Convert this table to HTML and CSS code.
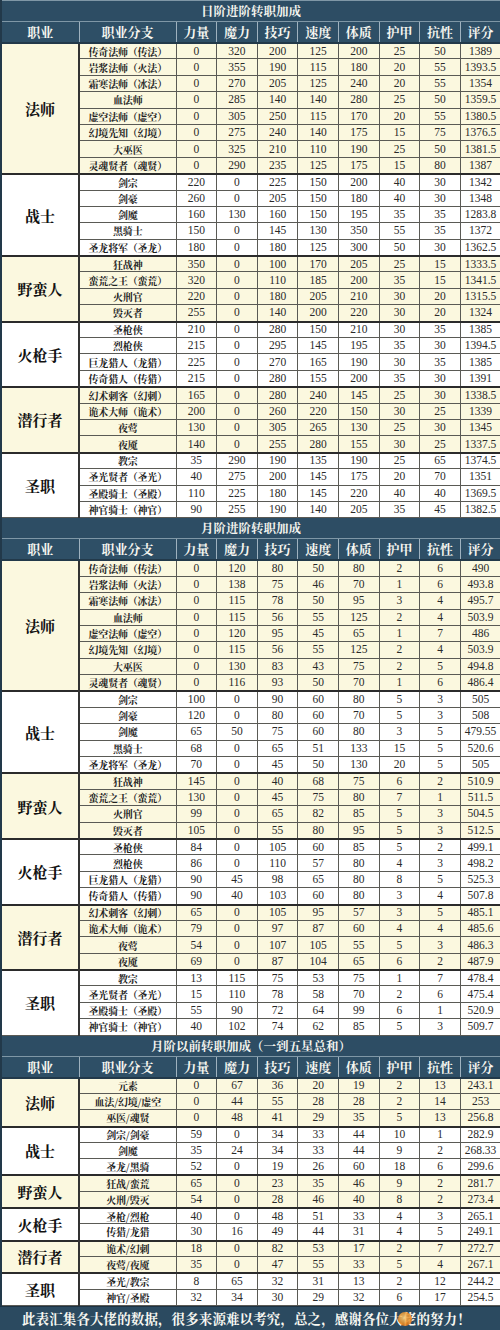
FILE: index.html
```html
<!DOCTYPE html>
<html lang="zh">
<head>
<meta charset="utf-8">
<title>转职加成</title>
<link rel="stylesheet" href="styles.css">
</head>
<body>
<div class="page">
<table class="grid">
<colgroup>
<col class="c-cls"><col class="c-br"><col span="8" class="c-num">
</colgroup>
<tbody>
<tr class="sec"><th colspan="10">日阶进阶转职加成</th></tr>
<tr class="hd"><th>职业</th><th>职业分支</th><th>力量</th><th>魔力</th><th>技巧</th><th>速度</th><th>体质</th><th>护甲</th><th>抗性</th><th>评分</th></tr>

<tr class="y first"><td class="cls" rowspan="8">法师</td><td class="br">传奇法师（传法）</td><td>0</td><td>320</td><td>200</td><td>125</td><td>200</td><td>25</td><td>50</td><td>1389</td></tr>
<tr class="y"><td class="br">岩浆法师（火法）</td><td>0</td><td>355</td><td>190</td><td>115</td><td>180</td><td>20</td><td>55</td><td>1393.5</td></tr>
<tr class="y"><td class="br">霜寒法师（冰法）</td><td>0</td><td>270</td><td>205</td><td>125</td><td>240</td><td>20</td><td>55</td><td>1354</td></tr>
<tr class="y"><td class="br">血法师</td><td>0</td><td>285</td><td>140</td><td>140</td><td>280</td><td>25</td><td>50</td><td>1359.5</td></tr>
<tr class="y"><td class="br">虚空法师（虚空）</td><td>0</td><td>305</td><td>250</td><td>115</td><td>170</td><td>20</td><td>55</td><td>1380.5</td></tr>
<tr class="y"><td class="br">幻境先知（幻境）</td><td>0</td><td>275</td><td>240</td><td>140</td><td>175</td><td>15</td><td>75</td><td>1376.5</td></tr>
<tr class="y"><td class="br">大巫医</td><td>0</td><td>325</td><td>210</td><td>110</td><td>190</td><td>25</td><td>50</td><td>1381.5</td></tr>
<tr class="y"><td class="br">灵魂贤者（魂贤）</td><td>0</td><td>290</td><td>235</td><td>125</td><td>175</td><td>15</td><td>80</td><td>1387</td></tr>

<tr class="w first"><td class="cls" rowspan="5">战士</td><td class="br">剑宗</td><td>220</td><td>0</td><td>225</td><td>150</td><td>200</td><td>40</td><td>30</td><td>1342</td></tr>
<tr class="w"><td class="br">剑豪</td><td>260</td><td>0</td><td>205</td><td>150</td><td>180</td><td>40</td><td>30</td><td>1348</td></tr>
<tr class="w"><td class="br">剑魔</td><td>160</td><td>130</td><td>160</td><td>150</td><td>195</td><td>35</td><td>35</td><td>1283.8</td></tr>
<tr class="w"><td class="br">黑骑士</td><td>150</td><td>0</td><td>145</td><td>130</td><td>350</td><td>55</td><td>35</td><td>1372</td></tr>
<tr class="w"><td class="br">圣龙将军（圣龙）</td><td>180</td><td>0</td><td>180</td><td>125</td><td>300</td><td>50</td><td>30</td><td>1362.5</td></tr>

<tr class="y first"><td class="cls" rowspan="4">野蛮人</td><td class="br">狂战神</td><td>350</td><td>0</td><td>100</td><td>170</td><td>205</td><td>25</td><td>15</td><td>1333.5</td></tr>
<tr class="y"><td class="br">蛮荒之王（蛮荒）</td><td>320</td><td>0</td><td>110</td><td>185</td><td>200</td><td>35</td><td>15</td><td>1341.5</td></tr>
<tr class="y"><td class="br">火刑官</td><td>220</td><td>0</td><td>180</td><td>205</td><td>210</td><td>30</td><td>20</td><td>1315.5</td></tr>
<tr class="y"><td class="br">毁灭者</td><td>255</td><td>0</td><td>140</td><td>200</td><td>220</td><td>30</td><td>20</td><td>1324</td></tr>

<tr class="w first"><td class="cls" rowspan="4">火枪手</td><td class="br">圣枪侠</td><td>210</td><td>0</td><td>280</td><td>150</td><td>210</td><td>30</td><td>35</td><td>1385</td></tr>
<tr class="w"><td class="br">烈枪侠</td><td>215</td><td>0</td><td>295</td><td>145</td><td>195</td><td>35</td><td>30</td><td>1394.5</td></tr>
<tr class="w"><td class="br">巨龙猎人（龙猎）</td><td>225</td><td>0</td><td>270</td><td>165</td><td>190</td><td>30</td><td>35</td><td>1385</td></tr>
<tr class="w"><td class="br">传奇猎人（传猎）</td><td>215</td><td>0</td><td>280</td><td>155</td><td>200</td><td>35</td><td>30</td><td>1391</td></tr>

<tr class="y first"><td class="cls" rowspan="4">潜行者</td><td class="br">幻术刺客（幻刺）</td><td>165</td><td>0</td><td>280</td><td>240</td><td>145</td><td>25</td><td>30</td><td>1338.5</td></tr>
<tr class="y"><td class="br">诡术大师（诡术）</td><td>200</td><td>0</td><td>260</td><td>220</td><td>150</td><td>30</td><td>25</td><td>1339</td></tr>
<tr class="y"><td class="br">夜莺</td><td>130</td><td>0</td><td>305</td><td>265</td><td>130</td><td>25</td><td>30</td><td>1345</td></tr>
<tr class="y"><td class="br">夜魇</td><td>140</td><td>0</td><td>255</td><td>280</td><td>155</td><td>30</td><td>25</td><td>1337.5</td></tr>

<tr class="w first"><td class="cls" rowspan="4">圣职</td><td class="br">教宗</td><td>35</td><td>290</td><td>190</td><td>135</td><td>190</td><td>25</td><td>65</td><td>1374.5</td></tr>
<tr class="w"><td class="br">圣光贤者（圣光）</td><td>40</td><td>275</td><td>200</td><td>145</td><td>175</td><td>20</td><td>70</td><td>1351</td></tr>
<tr class="w"><td class="br">圣殿骑士（圣殿）</td><td>110</td><td>225</td><td>180</td><td>145</td><td>220</td><td>40</td><td>40</td><td>1369.5</td></tr>
<tr class="w"><td class="br">神官骑士（神官）</td><td>90</td><td>255</td><td>190</td><td>140</td><td>205</td><td>35</td><td>45</td><td>1382.5</td></tr>

<tr class="sec"><th colspan="10">月阶进阶转职加成</th></tr>
<tr class="hd"><th>职业</th><th>职业分支</th><th>力量</th><th>魔力</th><th>技巧</th><th>速度</th><th>体质</th><th>护甲</th><th>抗性</th><th>评分</th></tr>

<tr class="y first"><td class="cls" rowspan="8">法师</td><td class="br">传奇法师（传法）</td><td>0</td><td>120</td><td>80</td><td>50</td><td>80</td><td>2</td><td>6</td><td>490</td></tr>
<tr class="y"><td class="br">岩浆法师（火法）</td><td>0</td><td>138</td><td>75</td><td>46</td><td>70</td><td>1</td><td>6</td><td>493.8</td></tr>
<tr class="y"><td class="br">霜寒法师（冰法）</td><td>0</td><td>115</td><td>78</td><td>50</td><td>95</td><td>3</td><td>4</td><td>495.7</td></tr>
<tr class="y"><td class="br">血法师</td><td>0</td><td>115</td><td>56</td><td>55</td><td>125</td><td>2</td><td>4</td><td>503.9</td></tr>
<tr class="y"><td class="br">虚空法师（虚空）</td><td>0</td><td>120</td><td>95</td><td>45</td><td>65</td><td>1</td><td>7</td><td>486</td></tr>
<tr class="y"><td class="br">幻境先知（幻境）</td><td>0</td><td>115</td><td>56</td><td>55</td><td>125</td><td>2</td><td>4</td><td>503.9</td></tr>
<tr class="y"><td class="br">大巫医</td><td>0</td><td>130</td><td>83</td><td>43</td><td>75</td><td>2</td><td>5</td><td>494.8</td></tr>
<tr class="y"><td class="br">灵魂贤者（魂贤）</td><td>0</td><td>116</td><td>93</td><td>50</td><td>70</td><td>1</td><td>6</td><td>486.4</td></tr>

<tr class="w first"><td class="cls" rowspan="5">战士</td><td class="br">剑宗</td><td>100</td><td>0</td><td>90</td><td>60</td><td>80</td><td>5</td><td>3</td><td>505</td></tr>
<tr class="w"><td class="br">剑豪</td><td>120</td><td>0</td><td>80</td><td>60</td><td>70</td><td>5</td><td>3</td><td>508</td></tr>
<tr class="w"><td class="br">剑魔</td><td>65</td><td>50</td><td>75</td><td>60</td><td>80</td><td>3</td><td>5</td><td>479.55</td></tr>
<tr class="w"><td class="br">黑骑士</td><td>68</td><td>0</td><td>65</td><td>51</td><td>133</td><td>15</td><td>5</td><td>520.6</td></tr>
<tr class="w"><td class="br">圣龙将军（圣龙）</td><td>70</td><td>0</td><td>45</td><td>50</td><td>130</td><td>20</td><td>5</td><td>505</td></tr>

<tr class="y first"><td class="cls" rowspan="4">野蛮人</td><td class="br">狂战神</td><td>145</td><td>0</td><td>40</td><td>68</td><td>75</td><td>6</td><td>2</td><td>510.9</td></tr>
<tr class="y"><td class="br">蛮荒之王（蛮荒）</td><td>130</td><td>0</td><td>45</td><td>75</td><td>80</td><td>7</td><td>1</td><td>511.5</td></tr>
<tr class="y"><td class="br">火刑官</td><td>99</td><td>0</td><td>65</td><td>82</td><td>85</td><td>5</td><td>3</td><td>504.5</td></tr>
<tr class="y"><td class="br">毁灭者</td><td>105</td><td>0</td><td>55</td><td>80</td><td>95</td><td>5</td><td>3</td><td>512.5</td></tr>

<tr class="w first"><td class="cls" rowspan="4">火枪手</td><td class="br">圣枪侠</td><td>84</td><td>0</td><td>105</td><td>60</td><td>85</td><td>5</td><td>2</td><td>499.1</td></tr>
<tr class="w"><td class="br">烈枪侠</td><td>86</td><td>0</td><td>110</td><td>57</td><td>80</td><td>4</td><td>3</td><td>498.2</td></tr>
<tr class="w"><td class="br">巨龙猎人（龙猎）</td><td>90</td><td>45</td><td>98</td><td>65</td><td>80</td><td>8</td><td>5</td><td>525.3</td></tr>
<tr class="w"><td class="br">传奇猎人（传猎）</td><td>90</td><td>40</td><td>103</td><td>60</td><td>80</td><td>3</td><td>4</td><td>507.8</td></tr>

<tr class="y first"><td class="cls" rowspan="4">潜行者</td><td class="br">幻术刺客（幻刺）</td><td>65</td><td>0</td><td>105</td><td>95</td><td>57</td><td>3</td><td>5</td><td>485.1</td></tr>
<tr class="y"><td class="br">诡术大师（诡术）</td><td>79</td><td>0</td><td>97</td><td>87</td><td>60</td><td>4</td><td>4</td><td>485.6</td></tr>
<tr class="y"><td class="br">夜莺</td><td>54</td><td>0</td><td>107</td><td>105</td><td>55</td><td>5</td><td>3</td><td>486.3</td></tr>
<tr class="y"><td class="br">夜魇</td><td>69</td><td>0</td><td>87</td><td>104</td><td>65</td><td>6</td><td>2</td><td>487.9</td></tr>

<tr class="w first"><td class="cls" rowspan="4">圣职</td><td class="br">教宗</td><td>13</td><td>115</td><td>75</td><td>53</td><td>75</td><td>1</td><td>7</td><td>478.4</td></tr>
<tr class="w"><td class="br">圣光贤者（圣光）</td><td>15</td><td>110</td><td>78</td><td>58</td><td>70</td><td>2</td><td>6</td><td>475.4</td></tr>
<tr class="w"><td class="br">圣殿骑士（圣殿）</td><td>55</td><td>90</td><td>72</td><td>64</td><td>99</td><td>6</td><td>1</td><td>520.9</td></tr>
<tr class="w"><td class="br">神官骑士（神官）</td><td>40</td><td>102</td><td>74</td><td>62</td><td>85</td><td>5</td><td>3</td><td>509.7</td></tr>

<tr class="sec"><th colspan="10">月阶以前转职加成（一到五星总和）</th></tr>
<tr class="hd"><th>职业</th><th>职业分支</th><th>力量</th><th>魔力</th><th>技巧</th><th>速度</th><th>体质</th><th>护甲</th><th>抗性</th><th>评分</th></tr>

<tr class="y first t3"><td class="cls" rowspan="3">法师</td><td class="br">元素</td><td>0</td><td>67</td><td>36</td><td>20</td><td>19</td><td>2</td><td>13</td><td>243.1</td></tr>
<tr class="y t3"><td class="br">血法/幻境/虚空</td><td>0</td><td>44</td><td>55</td><td>28</td><td>28</td><td>2</td><td>14</td><td>253</td></tr>
<tr class="y t3"><td class="br">巫医/魂贤</td><td>0</td><td>48</td><td>41</td><td>29</td><td>35</td><td>5</td><td>13</td><td>256.8</td></tr>

<tr class="w first t3"><td class="cls" rowspan="3">战士</td><td class="br">剑宗/剑豪</td><td>59</td><td>0</td><td>34</td><td>33</td><td>44</td><td>10</td><td>1</td><td>282.9</td></tr>
<tr class="w t3"><td class="br">剑魔</td><td>35</td><td>24</td><td>34</td><td>33</td><td>44</td><td>9</td><td>2</td><td>268.33</td></tr>
<tr class="w t3"><td class="br">圣龙/黑骑</td><td>52</td><td>0</td><td>19</td><td>26</td><td>60</td><td>18</td><td>6</td><td>299.6</td></tr>

<tr class="y first t3"><td class="cls" rowspan="2">野蛮人</td><td class="br">狂战/蛮荒</td><td>65</td><td>0</td><td>23</td><td>35</td><td>46</td><td>9</td><td>2</td><td>281.7</td></tr>
<tr class="y t3"><td class="br">火刑/毁灭</td><td>54</td><td>0</td><td>28</td><td>46</td><td>40</td><td>8</td><td>2</td><td>273.4</td></tr>

<tr class="w first t3"><td class="cls" rowspan="2">火枪手</td><td class="br">圣枪/烈枪</td><td>40</td><td>0</td><td>48</td><td>51</td><td>33</td><td>4</td><td>3</td><td>265.1</td></tr>
<tr class="w t3"><td class="br">传猎/龙猎</td><td>30</td><td>16</td><td>49</td><td>44</td><td>31</td><td>4</td><td>5</td><td>249.1</td></tr>

<tr class="y first t3"><td class="cls" rowspan="2">潜行者</td><td class="br">诡术/幻刺</td><td>18</td><td>0</td><td>82</td><td>53</td><td>17</td><td>2</td><td>7</td><td>272.7</td></tr>
<tr class="y t3"><td class="br">夜莺/夜魇</td><td>35</td><td>0</td><td>47</td><td>55</td><td>33</td><td>5</td><td>4</td><td>267.1</td></tr>

<tr class="w first t3"><td class="cls" rowspan="2">圣职</td><td class="br">圣光/教宗</td><td>8</td><td>65</td><td>32</td><td>31</td><td>13</td><td>2</td><td>12</td><td>244.2</td></tr>
<tr class="w t3"><td class="br">神官/圣殿</td><td>32</td><td>34</td><td>30</td><td>29</td><td>32</td><td>6</td><td>17</td><td>254.5</td></tr>
</tbody>
</table>
<div class="footer">
<span class="note">此表汇集各大佬的数据，很多来源难以考究，总之，感谢各位大佬的努力！</span>
<span class="mark"></span>
</div>
</div>
</body>
</html>
```
FILE: styles.css
```css
html, body {
  margin: 0;
  padding: 0;
  background: #2b4a60;
}
.page {
  width: 500px;
  height: 1330px;
  overflow: hidden;
  position: relative;
  background: #2b4a60;
}
.grid {
  width: 500px;
  table-layout: fixed;
  border-collapse: collapse;
  font-family: "Liberation Serif", "Noto Serif CJK SC", "Noto Sans CJK SC", serif;
  color: #2a2a2a;
}
.c-cls { width: 78px; }
.c-br { width: 97px; }
.c-num { width: 40.625px; }

.sec th {
  height: 20px;
  padding: 0;
  background: #2d4d64;
  color: #f4f4ee;
  font-family: "Noto Serif CJK SC", "Noto Sans CJK SC", serif;
  font-size: 12.5px;
  font-weight: 700;
  line-height: 16px;
  text-align: center;
  border: 1px solid #7f97a6;
  border-left: 2px solid #22394a;
  border-right: 2px solid #22394a;
}
.hd th {
  height: 20px;
  padding: 0;
  background: #2e4f66;
  color: #f6f6f0;
  font-family: "Noto Serif CJK SC", "Noto Sans CJK SC", serif;
  font-size: 13px;
  font-weight: 700;
  line-height: 16px;
  text-align: center;
  border: 1px solid #9fb2bf;
  border-bottom: 2px solid #22394a;
}
.hd th:first-child { border-left: 2px solid #22394a; }
.hd th:last-child { border-right: 2px solid #22394a; }

.grid td {
  height: 15.4px;
  padding: 0;
  text-align: center;
  font-size: 11.5px;
  line-height: 13px;
  border: 1px solid #5a5a55;
  white-space: nowrap;
  overflow: hidden;
}
.grid tr.first td { height: 14.4px; }
.grid tr.t3 td { height: 15.3px; }
.grid tr.t3.first td { height: 14.3px; }
.grid td:last-child { border-right: 2px solid #22394a; }
.grid td.cls {
  font-family: "Noto Serif CJK SC", "Noto Sans CJK SC", serif;
  font-size: 15px;
  font-weight: 700;
  color: #111;
  border-left: 2px solid #22394a;
  border-right: 2px solid #333;
}
.grid td.br {
  font-family: "Noto Serif CJK SC", "Noto Sans CJK SC", serif;
  font-size: 10px;
  font-weight: 700;
  color: #222;
  letter-spacing: -0.2px;
}
.y td { background: #fbf8df; }
.w td { background: #ffffff; }
.first td { border-top: 2px solid #2b2b2b; }

.footer {
  height: 23px;
  background: #2b4a60;
  border-top: 1px solid #1d3242;
  display: flex;
  align-items: center;
  padding-left: 22px;
  position: relative;
}
.note {
  font-family: "Noto Serif CJK SC", "Noto Sans CJK SC", serif;
  font-size: 13.5px;
  font-weight: 700;
  color: #f8f8f2;
  letter-spacing: 0.1px;
}
.mark {
  position: absolute;
  left: 398px;
  top: 5px;
  width: 14px;
  height: 14px;
  border-radius: 50%;
  background: radial-gradient(circle at 40% 40%, #ffd27a 0, #f08a1c 55%, #c9561a 100%);
  opacity: 0.85;
}
```
